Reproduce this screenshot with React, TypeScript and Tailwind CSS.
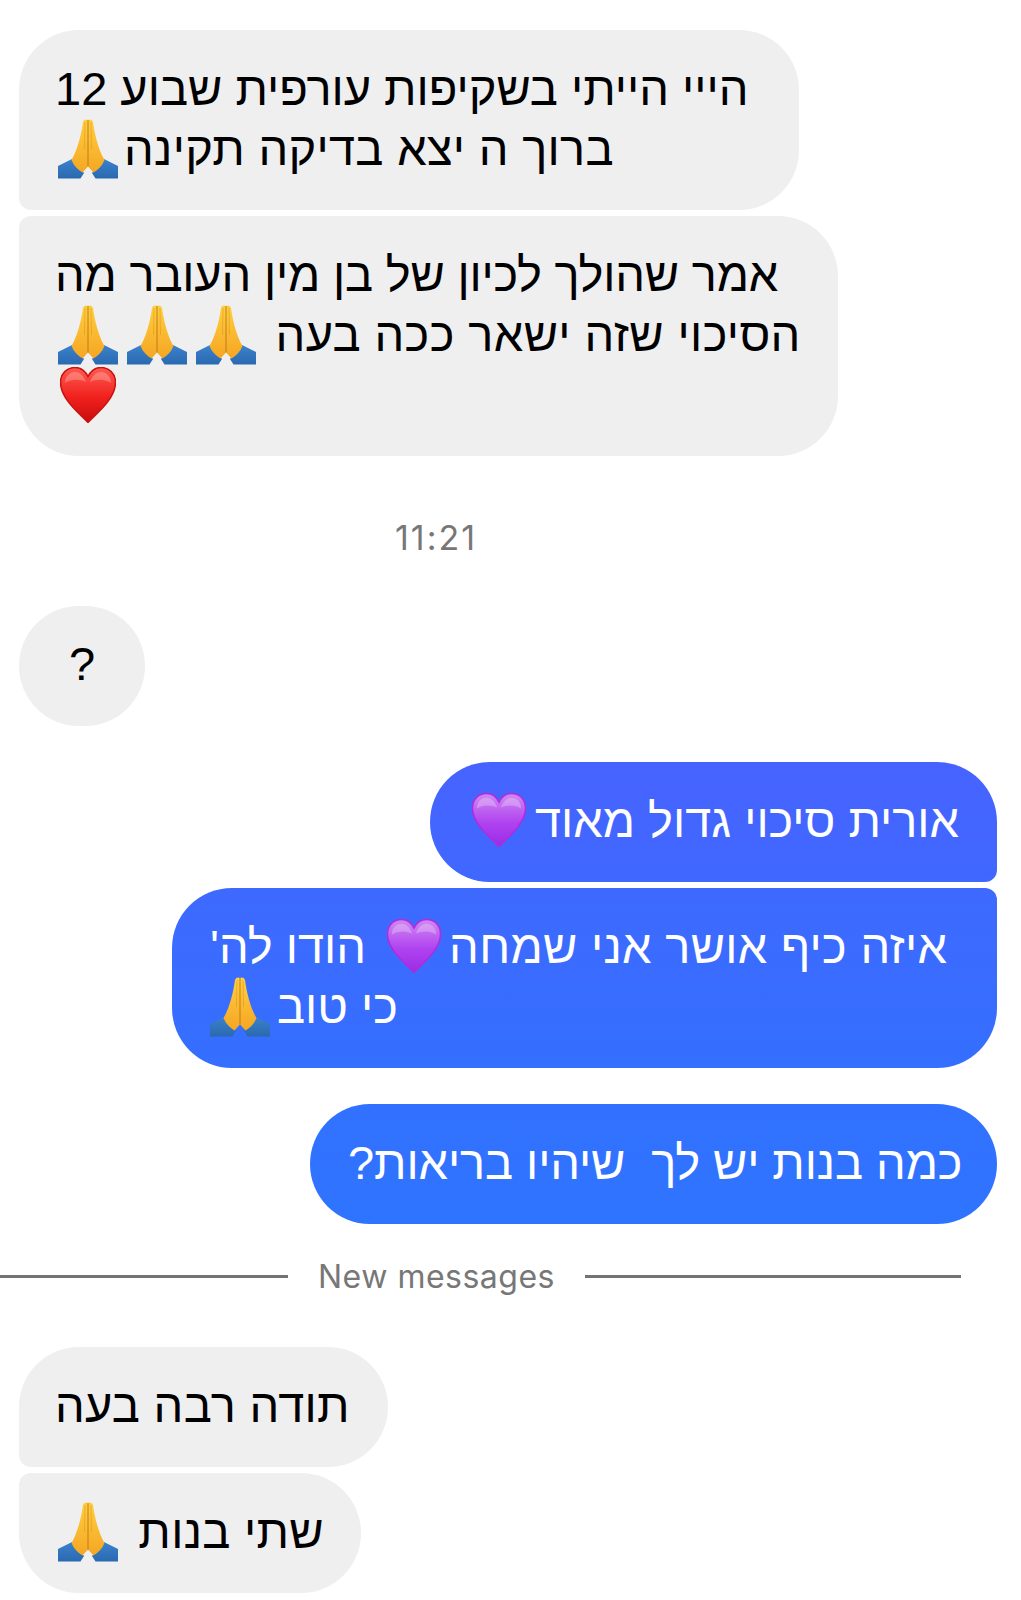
const PRAY_ID = "pray";

function Pray({ className = "" }: { className?: string }) {
  return (
    <svg viewBox="0 0 60 60" className={`inline-block align-top w-[60px] h-[60px] ${className}`}>
      <defs>
        <linearGradient id={`${PRAY_ID}-hand`} x1="0" y1="0" x2="0" y2="1">
          <stop offset="0" stopColor="#ffcf3f" />
          <stop offset="1" stopColor="#f5a623" />
        </linearGradient>
        <linearGradient id={`${PRAY_ID}-sleeve`} x1="0" y1="0" x2="0" y2="1">
          <stop offset="0" stopColor="#3b82cc" />
          <stop offset="1" stopColor="#2a69b0" />
        </linearGradient>
      </defs>
      <path d="M0 47 L14 40 L26 54 L22.5 59.500 L0 59.500Z" fill={`url(#${PRAY_ID}-sleeve)`} />
      <path d="M60 47 L46 40 L34 54 L37.500 59.500 L60 59.500Z" fill={`url(#${PRAY_ID}-sleeve)`} />
      <path d="M30 1 C28.500 0 26 0 25 3 C23.500 14 20 30 13.500 41 C16 47 20 51 24.500 53.500 L30 47.500Z" fill={`url(#${PRAY_ID}-hand)`} />
      <path d="M30 1 C31.500 0 34 0 35 3 C36.500 14 40 30 46.500 41 C44 47 40 51 35.500 53.500 L30 47.500Z" fill={`url(#${PRAY_ID}-hand)`} />
      <path d="M30 1 L30 47.500" stroke="#c07c18" strokeWidth="1" fill="none" />
      <path d="M27 3 L26.500 30 M33 3 L33.500 30" stroke="#dd9420" strokeWidth="0.7" fill="none" opacity="0.8" />
    </svg>
  );
}

const HEART_PATH =
  "M28 55.500 C20 47 0.500 32 0.500 15.500 C0.500 6.500 7 0.500 15 0.500 C21 0.500 25 3.500 28 9.500 C31 3.500 35 0.500 41 0.500 C49 0.500 55.500 6.500 55.500 15.500 C55.500 32 36 47 28 55.500Z";

function Heart({ tone, className }: { tone: "red" | "purple"; className: string }) {
  const top = tone === "red" ? "#ff5a50" : "#d08af2";
  const mid = tone === "red" ? "#f0201c" : "#b043f0";
  const low = tone === "red" ? "#c80d0d" : "#9a2ce6";
  const edge = tone === "red" ? "#c8120f" : "#b828d8";
  const id = `heart-${tone}`;
  return (
    <svg viewBox="0 0 56 56" className={`inline-block align-top mt-[2px] ${className}`}>
      <defs>
        <linearGradient id={id} x1="0" y1="0" x2="0" y2="1">
          <stop offset="0" stopColor={top} />
          <stop offset="0.55" stopColor={mid} />
          <stop offset="1" stopColor={low} />
        </linearGradient>
      </defs>
      <path d={HEART_PATH} fill={`url(#${id})`} stroke={edge} strokeWidth="1.500" />
      <path d="M5 16 C5 9 10 5 15 5 C20 5 24 9 26 15 C20 12 11 12 5 16Z" fill="#fff" opacity="0.25" />
      <path d="M51 16 C51 9 46 5 41 5 C36 5 32 9 30 15 C36 12 45 12 51 16Z" fill="#fff" opacity="0.25" />
    </svg>
  );
}

function Bubble({
  width,
  className,
  children,
}: {
  width: string;
  className: string;
  children: React.ReactNode;
}) {
  return (
    <div dir="rtl" className={`${width} ${className} pt-[29px] pb-[31px] text-left text-[47px] leading-[60px] whitespace-nowrap`}>
      {children}
    </div>
  );
}

const IN = "bg-[#efefef] text-black self-start pl-[36px]";
const OUT = "text-white self-end pl-[38px]";

export default function App() {
  return (
    <div className="w-[1021px] h-[1600px] bg-white flex flex-col pt-[30px] overflow-hidden font-['Liberation_Sans',sans-serif]">
      <div className="flex flex-col pl-[19px] pr-6">
        <Bubble width="w-[780px]" className={`${IN} rounded-[60px] rounded-bl-[12px]`}>
          <div>הייי הייתי בשקיפות עורפית שבוע 12</div>
          <div>
            <span className="tracking-[0.3px]">ברוך ה יצא בדיקה תקינה</span>
            <Pray className="mr-[6px] ml-[3px]" />
          </div>
        </Bubble>
        <Bubble width="w-[819px]" className={`${IN} mt-1.5 rounded-[60px] rounded-tl-[12px]`}>
          <div className="tracking-[-0.2px]">אמר שהולך לכיון של בן מין העובר מה</div>
          <div>
            <span className="tracking-[0.4px]">הסיכוי שזה ישאר ככה בעה </span>
            <Pray className="mr-[6px]" />
            <Pray className="mr-[9px]" />
            <Pray className="mr-[9px] ml-[3px]" />
          </div>
          <div><Heart tone="red" className="w-[56px] h-[56px] ml-[5px]" /></div>
        </Bubble>

        <div className="w-[834px] h-[150px] pt-[63px] text-center text-[34px] tracking-[2px] leading-[38px] text-[#777777] font-['Inter',sans-serif]">
          11:21
        </div>

        <Bubble width="w-[126px]" className={`${IN} rounded-[60px] !pl-0 !text-center !pt-[28px] !pb-[32px]`}>
          ?
        </Bubble>

        <Bubble width="w-[567px]" className={`${OUT} mt-9 bg-gradient-to-b from-[#4763ff] to-[#3f68ff] rounded-[60px] rounded-br-[12px]`}>
          <div>
            אורית סיכוי גדול מאוד
            <Heart tone="purple" className="w-[54px] h-[54px] mr-[9px] ml-[4px]" />
          </div>
        </Bubble>
        <Bubble width="w-[825px]" className={`${OUT} mt-1.5 bg-gradient-to-b from-[#3e69ff] to-[#346fff] rounded-[60px] rounded-tr-[12px]`}>
          <div>
            <span className="tracking-[0.3px]">איזה כיף אושר אני שמחה</span>
            <Heart tone="purple" className="w-[54px] h-[54px] mr-[8px] ml-[8px]" /> הודו לה'
          </div>
          <div>כי טוב<Pray className="mr-[7px]" /></div>
        </Bubble>
        <Bubble width="w-[687px]" className={`${OUT} mt-9 bg-gradient-to-b from-[#3271ff] to-[#2e74ff] rounded-[60px] tracking-[-0.1px]`}>
          כמה בנות יש לך &nbsp;שיהיו בריאות?
        </Bubble>
      </div>

      <div className="flex items-center w-[961px] h-[123px] pb-[19px] text-[32px] text-[#777777] font-['Inter',sans-serif]">
        <div className="w-[288px] h-[3px] bg-[#737373]" />
        <div className="flex-1 pt-[2px] text-center tracking-[0.5px]">New messages</div>
        <div className="w-[376px] h-[3px] bg-[#737373]" />
      </div>

      <div className="flex flex-col pl-[19px] pr-6">
        <Bubble width="w-[369px]" className={`${IN} rounded-[60px] rounded-bl-[12px] tracking-[0.3px]`}>
          תודה רבה בעה
        </Bubble>
        <Bubble width="w-[342px]" className={`${IN} mt-1.5 rounded-[60px] rounded-tl-[12px]`}>
          <span className="tracking-[0.3px]">שתי בנות </span>
          <Pray className="mr-[7px] ml-[3px]" />
        </Bubble>
      </div>
    </div>
  );
}
